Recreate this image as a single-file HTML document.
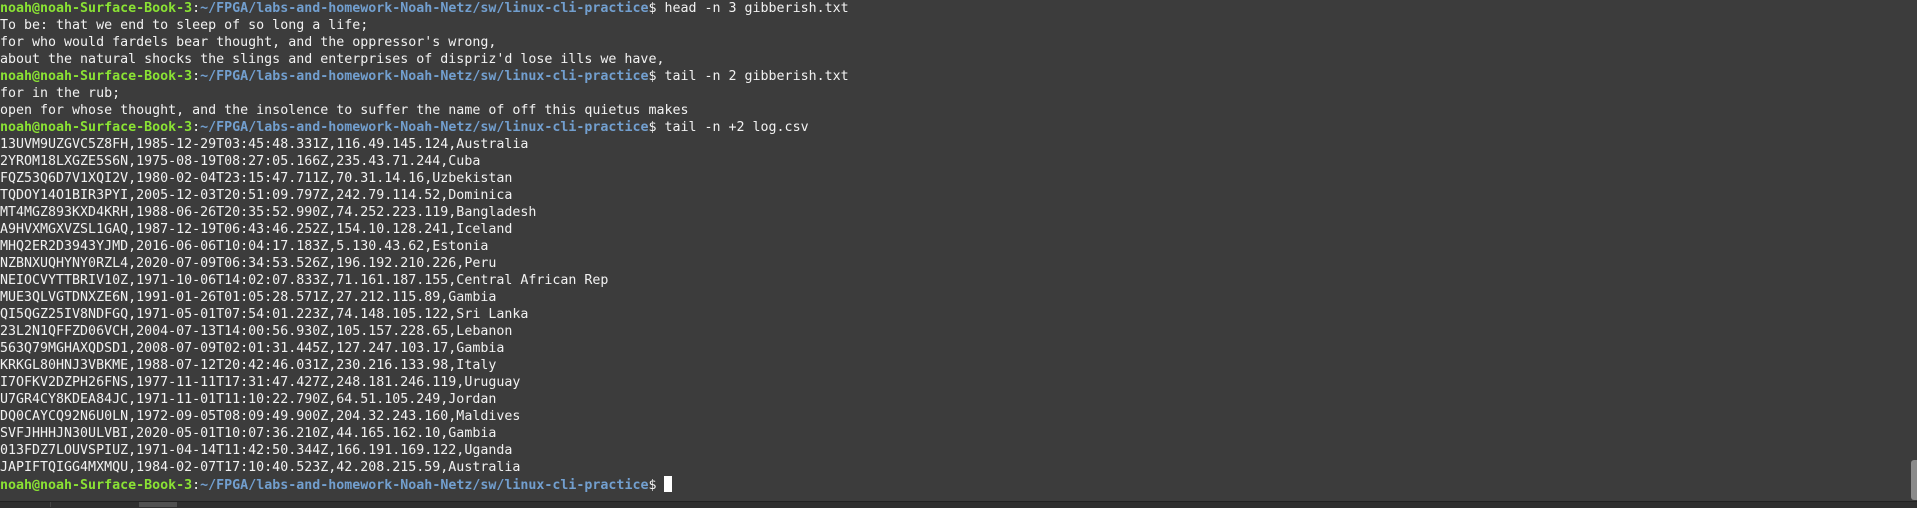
<!DOCTYPE html>
<html><head><meta charset="utf-8"><style>
html,body{margin:0;padding:0;width:1917px;height:507px;overflow:hidden;background:#3c3c3c;}
pre{margin:0;position:absolute;left:0;top:0px;font-family:"DejaVu Sans Mono","Liberation Mono",monospace;font-size:13.3px;line-height:17px;color:#f2f2f2;white-space:pre;}
.g{color:#8ae234;font-weight:bold}
.b{color:#729fcf;font-weight:bold}
.cur{display:inline-block;width:8px;height:16px;background:#fff;vertical-align:-3px;}
.bar{position:absolute;left:0;top:501px;width:1917px;height:6px;background:#2f2f2f;border-top:1px solid #232323;}
.thumb{position:absolute;left:139px;top:502px;width:38px;height:5px;background:#505050;}
.sep{position:absolute;left:50px;top:502px;width:1px;height:5px;background:#444;}
.vs{position:absolute;left:1911px;top:460px;width:6px;height:40px;background:#8a8a8a;border-radius:3px 0 0 3px;}
</style></head><body>
<pre><span class="g">noah@noah-Surface-Book-3</span>:<span class="b">~/FPGA/labs-and-homework-Noah-Netz/sw/linux-cli-practice</span>$ head -n 3 gibberish.txt
To be: that we end to sleep of so long a life;
for who would fardels bear thought, and the oppressor's wrong,
about the natural shocks the slings and enterprises of dispriz'd lose ills we have,
<span class="g">noah@noah-Surface-Book-3</span>:<span class="b">~/FPGA/labs-and-homework-Noah-Netz/sw/linux-cli-practice</span>$ tail -n 2 gibberish.txt
for in the rub;
open for whose thought, and the insolence to suffer the name of off this quietus makes
<span class="g">noah@noah-Surface-Book-3</span>:<span class="b">~/FPGA/labs-and-homework-Noah-Netz/sw/linux-cli-practice</span>$ tail -n +2 log.csv
13UVM9UZGVC5Z8FH,1985-12-29T03:45:48.331Z,116.49.145.124,Australia
2YROM18LXGZE5S6N,1975-08-19T08:27:05.166Z,235.43.71.244,Cuba
FQZ53Q6D7V1XQI2V,1980-02-04T23:15:47.711Z,70.31.14.16,Uzbekistan
TQDOY14O1BIR3PYI,2005-12-03T20:51:09.797Z,242.79.114.52,Dominica
MT4MGZ893KXD4KRH,1988-06-26T20:35:52.990Z,74.252.223.119,Bangladesh
A9HVXMGXVZSL1GAQ,1987-12-19T06:43:46.252Z,154.10.128.241,Iceland
MHQ2ER2D3943YJMD,2016-06-06T10:04:17.183Z,5.130.43.62,Estonia
NZBNXUQHYNY0RZL4,2020-07-09T06:34:53.526Z,196.192.210.226,Peru
NEIOCVYTTBRIV10Z,1971-10-06T14:02:07.833Z,71.161.187.155,Central African Rep
MUE3QLVGTDNXZE6N,1991-01-26T01:05:28.571Z,27.212.115.89,Gambia
QI5QGZ25IV8NDFGQ,1971-05-01T07:54:01.223Z,74.148.105.122,Sri Lanka
23L2N1QFFZD06VCH,2004-07-13T14:00:56.930Z,105.157.228.65,Lebanon
563Q79MGHAXQDSD1,2008-07-09T02:01:31.445Z,127.247.103.17,Gambia
KRKGL80HNJ3VBKME,1988-07-12T20:42:46.031Z,230.216.133.98,Italy
I7OFKV2DZPH26FNS,1977-11-11T17:31:47.427Z,248.181.246.119,Uruguay
U7GR4CY8KDEA84JC,1971-11-01T11:10:22.790Z,64.51.105.249,Jordan
DQ0CAYCQ92N6U0LN,1972-09-05T08:09:49.900Z,204.32.243.160,Maldives
SVFJHHHJN30ULVBI,2020-05-01T10:07:36.210Z,44.165.162.10,Gambia
013FDZ7LOUVSPIUZ,1971-04-14T11:42:50.344Z,166.191.169.122,Uganda
JAPIFTQIGG4MXMQU,1984-02-07T17:10:40.523Z,42.208.215.59,Australia
<span class="g">noah@noah-Surface-Book-3</span>:<span class="b">~/FPGA/labs-and-homework-Noah-Netz/sw/linux-cli-practice</span>$ <span class="cur"></span></pre>
<div class="vs"></div>
<div class="bar"></div>
<div class="sep"></div>
<div class="thumb"></div>
</body></html>
